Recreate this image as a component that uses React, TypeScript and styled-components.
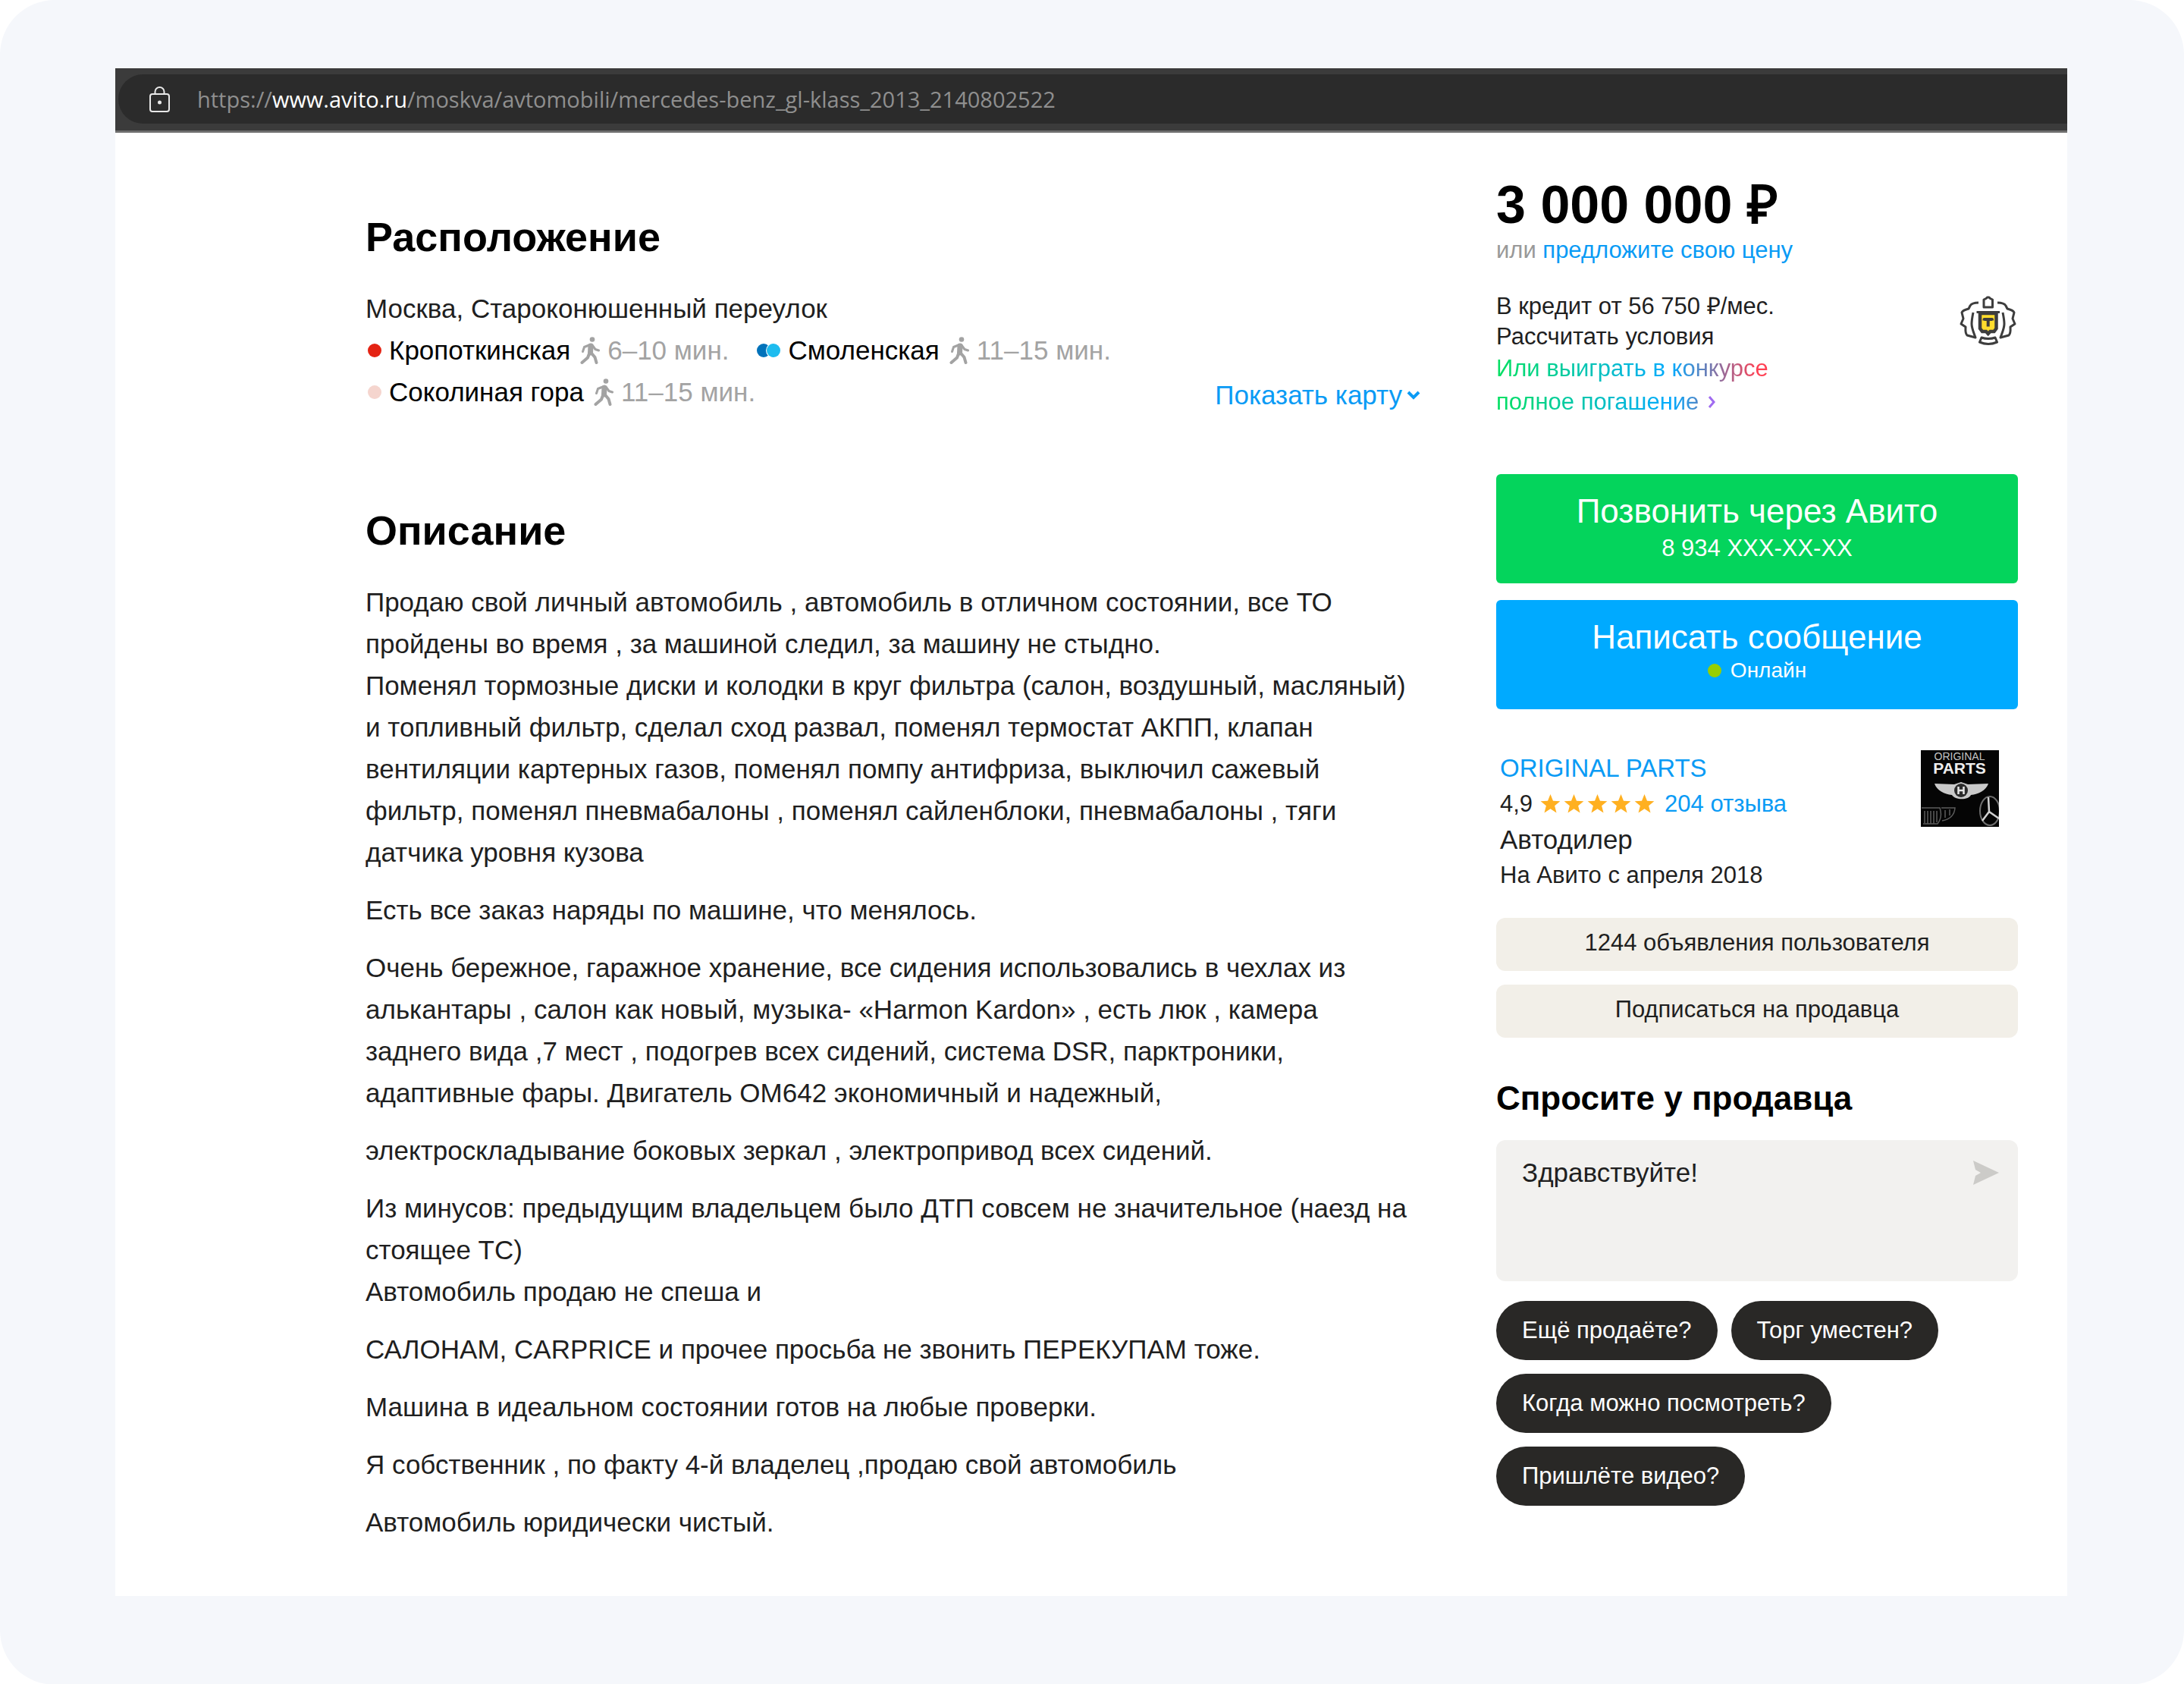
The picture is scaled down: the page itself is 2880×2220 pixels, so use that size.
import React from "react";
import styled, { createGlobalStyle, css } from "styled-components";

const GlobalStyle = createGlobalStyle`
  *, *::before, *::after { box-sizing: border-box; }
  body {
    margin: 0;
    background: #fff;
    color: #1f1f1f;
    font-family: "Liberation Sans", Arial, sans-serif;
  }
  h1, h2, p, ul { margin: 0; padding: 0; }
  button, textarea { font: inherit; color: inherit; border: 0; margin: 0; }
  button { cursor: pointer; }
  svg { display: block; flex: none; }
`;

const Backdrop = styled.div`
  min-height: 100vh;
  padding: 90px 154px 117px 152px;
  background: #f5f7fb;
  border-radius: 72px;
`;

const Browser = styled.div`
  background: #fff;
`;

const BrowserBar = styled.header`
  padding: 8px 0 9px 4px;
  background: #3b3b3b;
  border-bottom: 3px solid #6e6e6e;
`;

const AddressBar = styled.div`
  display: flex;
  align-items: center;
  gap: 34px;
  height: 65px;
  padding-left: 40px;
  border-radius: 33px 0 0 33px;
  background: #2b2b2b;
  color: #8f8f8f;
  font: 29px/40px "Open Sans", "Noto Sans", sans-serif;
`;

const Host = styled.span`
  color: #fff;
`;

const Page = styled.div`
  display: grid;
  grid-template-columns: minmax(0, 1fr) 688px;
  column-gap: 100px;
  padding: 55px 65px 70px 330px;
`;

const Main = styled.main`
  padding-top: 50px;
`;

const Location = styled.section`
  margin-bottom: 123px;
`;

const SectionTitle = styled.h2`
  margin-bottom: 35px;
  color: #000;
  font-size: 54px;
  line-height: 64px;
`;

const Address = styled.p`
  font-size: 35px;
  line-height: 55px;
`;

const StationsRow = styled.div`
  display: flex;
  align-items: flex-end;
  justify-content: space-between;
`;

const Stations = styled.ul`
  display: flex;
  flex-wrap: wrap;
  column-gap: 34px;
  max-width: 1020px;
  list-style: none;
  font-size: 35px;
  line-height: 55px;
`;

const Station = styled.li`
  display: flex;
  align-items: center;
  color: #000;
`;

const Dots = styled.span`
  display: flex;
  margin: 0 10px 0 3px;
`;

const Dot = styled.span<{ $color: string }>`
  width: 18px;
  height: 18px;
  border-radius: 50%;
  background: ${(p) => p.$color};

  & + & {
    margin-left: -5px;
    box-shadow: 0 0 0 1px #fff;
  }
`;

const Walk = styled.span`
  display: flex;
  align-items: center;
  gap: 10px;
  margin-left: 13px;
  color: #a3a3a3;
`;

const linkColor = css`
  color: #0a9bf5;
  text-decoration: none;
`;

const MapButton = styled.button`
  display: flex;
  align-items: center;
  gap: 6px;
  padding: 0;
  background: none;
  ${linkColor}
  font-size: 35px;
  line-height: 46px;
`;

const Description = styled.div`
  display: grid;
  row-gap: 21px;
  max-width: 1380px;
  font-size: 35px;
  line-height: 55px;
`;

const Aside = styled.aside`
  display: flex;
  flex-direction: column;
`;

const Price = styled.h1`
  color: #000;
  font-size: 70px;
  line-height: 80px;
`;

const Offer = styled.p`
  margin-bottom: 34px;
  color: #999;
  font-size: 31px;
  line-height: 40px;
`;

const Link = styled.a`
  ${linkColor}
`;

const Credit = styled.div`
  display: flex;
  justify-content: space-between;
  margin-bottom: 73px;
  padding-right: 2px;
  font-size: 31px;
  line-height: 40px;
`;

const CrestSlot = styled.div`
  padding-top: 5px;
`;

const ContestLink = styled.a`
  display: block;
  text-decoration: none;
  line-height: 44px;
`;

const GradientText = styled.span`
  color: transparent;
  background: linear-gradient(90deg, #04e061 0, #00aaff 230px, #ff4053 345px);
  background-size: 358px 100%;
  -webkit-background-clip: text;
  background-clip: text;
`;

const GradientLine = styled.span`
  display: flex;
  align-items: center;
  gap: 12px;
`;

const Contacts = styled.div`
  display: grid;
  row-gap: 22px;
  margin-bottom: 54px;
`;

const ContactButton = styled.button<{ $color: string; $size: number; $line: number }>`
  display: flex;
  flex-direction: column;
  align-items: center;
  height: 144px;
  padding: 23px 16px 0;
  border-radius: 6px;
  background: ${(p) => p.$color};
  color: #fff;
  font-size: ${(p) => p.$size}px;
  line-height: ${(p) => p.$line}px;
`;

const ContactTitle = styled.span`
  font-size: 44px;
  line-height: 52px;
`;

const Status = styled.span`
  display: flex;
  align-items: center;
  gap: 12px;
`;

const Seller = styled.section`
  display: flex;
  justify-content: space-between;
  margin-bottom: 33px;
  padding: 0 25px 0 5px;
  line-height: 47px;
`;

const SellerLine = styled.p<{ $size: number }>`
  display: flex;
  align-items: center;
  font-size: ${(p) => p.$size}px;
`;

const Stars = styled.span`
  display: flex;
  gap: 4px;
  margin: 0 13px 0 10px;
`;

const SellerActions = styled.div`
  display: grid;
  row-gap: 18px;
  margin-bottom: 54px;
`;

const SoftButton = styled.button`
  padding: 13px 16px 17px;
  border-radius: 12px;
  background: #f2efe8;
  font-size: 31px;
  line-height: 40px;
`;

const AskTitle = styled.h2`
  margin-bottom: 29px;
  color: #000;
  font-size: 44px;
  line-height: 52px;
`;

const MessageBox = styled.form`
  display: flex;
  align-items: flex-start;
  height: 186px;
  margin-bottom: 26px;
  padding: 20px 24px 20px 34px;
  border-radius: 12px;
  background: #f2f1ef;
`;

const MessageInput = styled.textarea`
  flex: 1;
  height: 100%;
  padding: 0;
  resize: none;
  outline: none;
  background: transparent;
  font-size: 35px;
  line-height: 46px;
`;

const SendButton = styled.button`
  padding: 6px 0;
  background: none;
`;

const Chips = styled.div`
  display: flex;
  flex-wrap: wrap;
  gap: 18px;
  max-width: 600px;
`;

const Chip = styled.button`
  padding: 19px 34px;
  border-radius: 39px;
  background: #292826;
  color: #fff;
  font-size: 31px;
  line-height: 40px;
`;

const LockIcon = () => (
  <svg width="30" height="36" viewBox="0 0 30 36" fill="none" stroke="#e8e8e8" strokeWidth="2">
    <rect x="2" y="11" width="25" height="23" rx="3" />
    <path d="M8.500 11V8a6 6 0 0 1 12 0v3" />
    <circle cx="14.500" cy="22" r="2.500" fill="#e8e8e8" stroke="none" />
  </svg>
);

const WalkIcon = () => (
  <svg width="26" height="36" viewBox="0 0 26 36" fill="none" stroke="#a3a3a3" strokeLinejoin="round" strokeLinecap="round">
    <circle cx="16" cy="3.500" r="3.300" fill="#a3a3a3" stroke="none" />
    <path d="M14 12l-.5 9" strokeWidth="7" />
    <path d="M13 10.500L5.500 13.500 3.500 19.500" strokeWidth="3" />
    <path d="M16 11l4 5.500 4.500 1.500" strokeWidth="3" />
    <path d="M12.500 21L10 27.500 2.500 34" strokeWidth="4" />
    <path d="M14.500 21l5 6 2 7" strokeWidth="4" />
  </svg>
);

const ChevronDown = () => (
  <svg width="18" height="14" viewBox="0 0 18 14" fill="none" stroke="#0a9bf5" strokeWidth="4">
    <path d="M2 3l7 7 7-7" />
  </svg>
);

const ChevronRight = () => (
  <svg width="12" height="18" viewBox="0 0 12 18" fill="none" stroke="#a06bf0" strokeWidth="3">
    <path d="M2 2l6 7-6 7" />
  </svg>
);

const StarIcon = () => (
  <svg width="27" height="27" viewBox="0 0 24 24" fill="#ffb021">
    <path d="M12 .8l3.100 7.800 8.300.5-6.400 5.300 2.100 8.200L12 18.100l-7.100 4.500L7 14.400.6 9.100l8.300-.5z" />
  </svg>
);

const SendIcon = () => (
  <svg width="36" height="34" viewBox="0 0 36 34" fill="#cccbc8">
    <path d="M1 1l34 16L1 33l3-12 7-4-7-4z" />
  </svg>
);

const BankCrest = () => (
  <svg width="76" height="66" viewBox="0 0 76 66" fill="none" stroke="#3d3d3d" strokeWidth="3" strokeLinejoin="round">
    <path d="M33 16V6l3-1.500 1.500-1.500h2.500l1.500 1.500L44.500 6v10z" />
    <path d="M26 10c-5 0-9 1-11 4l-2 4c-4 1-8 2-9 5l2 8-3 7 6 4c0 4-1 8 2 11l11 3c-2-6-5-12-5-18 0-5 1-10 2-15" />
    <path d="M51 10c5 0 9 1 11 4l2 4c4 1 8 2 9 5l-2 8 3 7-6 4c0 4 1 8-2 11l-11 3c2-6 5-12 5-18 0-5-1-10-2-15" />
    <path d="M28 24h21.500v20l-3 4h-5l-2.800 3-2.700-3h-5l-3-4z" fill="#ffdd2d" strokeWidth="4.500" strokeLinejoin="miter" />
    <path d="M23.500 22.500h30.500" />
    <path d="M33.500 33.500v-1.500h10.500v1.500M38.700 32v9.500" strokeWidth="4" />
    <path d="M30 56c5 2 13 2 18 0l2.500 6c-7 3-16 3-23 0z" />
  </svg>
);

const SellerLogo = () => (
  <svg width="103" height="101" viewBox="0 0 103 101" role="img" aria-label="ORIGINAL PARTS">
    <rect width="103" height="101" fill="#050505" />
    <g fontFamily="Liberation Sans, Arial, sans-serif" textAnchor="middle">
      <text x="51" y="13" fontSize="14" fill="#c4c4c4">ORIGINAL</text>
      <text x="51" y="31" fontSize="21" fontWeight="700" fill="#ededed">PARTS</text>
    </g>
    <path d="M18 44l26 1 9-3 9 3 27-1c-3 9-13 14-23 15-3 7-21 7-25 0-10-1-20-6-23-15z" fill="#c9c9c9" />
    <circle cx="53" cy="53" r="9" fill="#2b2b2b" />
    <path d="M49.500 48v10M56.500 48v10M50 53h6" stroke="#e6e6e6" strokeWidth="2.500" />
    <g fill="none" stroke="#5c5c5c" strokeWidth="1.500">
      <path d="M1 76h24q4 12-3 21H3M5 80v16M9 80v17M13 80v17M17 80v17M21 80v15" />
      <path d="M27 76h18q-1 14-17 17M32 79v10M38 78v8" />
    </g>
    <ellipse cx="91" cy="80" rx="13" ry="19" fill="none" stroke="#6e6e6e" strokeWidth="2" />
    <path d="M89 62l1 19 13 9M90 81l-9 12" fill="none" stroke="#d0d0d0" strokeWidth="2.500" />
  </svg>
);

const stations = [
  { name: "Кропоткинская", colors: ["#e42313"], time: "6–10 мин." },
  { name: "Смоленская", colors: ["#0072ba", "#1ebcef"], time: "11–15 мин." },
  { name: "Соколиная гора", colors: ["#f5d5ce"], time: "11–15 мин." },
];

const paragraphs = [
  [
    "Продаю свой личный автомобиль , автомобиль в отличном состоянии, все ТО пройдены во время , за машиной следил, за машину не стыдно.",
    "Поменял тормозные диски и колодки в круг фильтра (салон, воздушный, масляный) и топливный фильтр, сделал сход развал, поменял термостат АКПП, клапан вентиляции картерных газов, поменял помпу антифриза, выключил сажевый фильтр, поменял пневмабалоны , поменял сайленблоки, пневмабалоны , тяги датчика уровня кузова",
  ],
  ["Есть все заказ наряды по машине, что менялось."],
  [
    "Очень бережное, гаражное хранение, все сидения использовались в чехлах из алькантары , салон как новый, музыка- «Harmon Kardon» , есть люк , камера заднего вида ,7 мест , подогрев всех сидений, система DSR, парктроники, адаптивные фары. Двигатель OM642 экономичный и надежный,",
  ],
  ["электроскладывание боковых зеркал , электропривод всех сидений."],
  [
    "Из минусов: предыдущим владельцем было ДТП совсем не значительное (наезд на стоящее ТС)",
    "Автомобиль продаю не спеша и",
  ],
  ["САЛОНАМ, CARPRICE и прочее просьба не звонить ПЕРЕКУПАМ тоже."],
  ["Машина в идеальном состоянии готов на любые проверки."],
  ["Я собственник , по факту 4-й владелец ,продаю свой автомобиль"],
  ["Автомобиль юридически чистый."],
];

const questions = ["Ещё продаёте?", "Торг уместен?", "Когда можно посмотреть?", "Пришлёте видео?"];

export default function App() {
  return (
    <>
      <GlobalStyle />
      <Backdrop>
        <Browser>
          <BrowserBar>
            <AddressBar>
              <LockIcon />
              <span>
                https://<Host>www.avito.ru</Host>/moskva/avtomobili/mercedes-benz_gl-klass_2013_2140802522
              </span>
            </AddressBar>
          </BrowserBar>
          <Page>
            <Main>
              <Location>
                <SectionTitle>Расположение</SectionTitle>
                <Address>Москва, Староконюшенный переулок</Address>
                <StationsRow>
                  <Stations>
                    {stations.map((s) => (
                      <Station key={s.name}>
                        <Dots>
                          {s.colors.map((c) => (
                            <Dot key={c} $color={c} />
                          ))}
                        </Dots>
                        {s.name}
                        <Walk>
                          <WalkIcon />
                          {s.time}
                        </Walk>
                      </Station>
                    ))}
                  </Stations>
                  <MapButton type="button">
                    Показать карту
                    <ChevronDown />
                  </MapButton>
                </StationsRow>
              </Location>
              <section>
                <SectionTitle>Описание</SectionTitle>
                <Description>
                  {paragraphs.map((lines) => (
                    <p key={lines[0]}>
                      {lines.map((line, i) => (
                        <React.Fragment key={line}>
                          {i > 0 && <br />}
                          {line}
                        </React.Fragment>
                      ))}
                    </p>
                  ))}
                </Description>
              </section>
            </Main>
            <Aside>
              <Price>3 000 000 ₽</Price>
              <Offer>
                или <Link href="#offer">предложите свою цену</Link>
              </Offer>
              <Credit>
                <div>
                  <p>В кредит от 56 750 ₽/мес.</p>
                  <p>Рассчитать условия</p>
                  <ContestLink href="#contest">
                    <GradientLine>
                      <GradientText>Или выиграть в конкурсе</GradientText>
                    </GradientLine>
                    <GradientLine>
                      <GradientText>полное погашение</GradientText>
                      <ChevronRight />
                    </GradientLine>
                  </ContestLink>
                </div>
                <CrestSlot>
                  <BankCrest />
                </CrestSlot>
              </Credit>
              <Contacts>
                <ContactButton type="button" $color="#04d45c" $size={31} $line={46}>
                  <ContactTitle>Позвонить через Авито</ContactTitle>
                  <span>8 934 XXX-XX-XX</span>
                </ContactButton>
                <ContactButton type="button" $color="#00aaff" $size={28} $line={36}>
                  <ContactTitle>Написать сообщение</ContactTitle>
                  <Status>
                    <Dot $color="#97cf03" />
                    Онлайн
                  </Status>
                </ContactButton>
              </Contacts>
              <Seller>
                <div>
                  <SellerLine $size={33}>
                    <Link href="#seller">ORIGINAL PARTS</Link>
                  </SellerLine>
                  <SellerLine $size={31}>
                    4,9
                    <Stars>
                      {[1, 2, 3, 4, 5].map((n) => (
                        <StarIcon key={n} />
                      ))}
                    </Stars>
                    <Link href="#reviews">204 отзыва</Link>
                  </SellerLine>
                  <SellerLine $size={35}>Автодилер</SellerLine>
                  <SellerLine $size={31}>На Авито с апреля 2018</SellerLine>
                </div>
                <SellerLogo />
              </Seller>
              <SellerActions>
                <SoftButton type="button">1244 объявления пользователя</SoftButton>
                <SoftButton type="button">Подписаться на продавца</SoftButton>
              </SellerActions>
              <AskTitle id="ask">Спросите у продавца</AskTitle>
              <MessageBox>
                <MessageInput aria-labelledby="ask" defaultValue="Здравствуйте!" />
                <SendButton type="button" aria-label="Отправить">
                  <SendIcon />
                </SendButton>
              </MessageBox>
              <Chips>
                {questions.map((q) => (
                  <Chip key={q} type="button">
                    {q}
                  </Chip>
                ))}
              </Chips>
            </Aside>
          </Page>
        </Browser>
      </Backdrop>
    </>
  );
}
